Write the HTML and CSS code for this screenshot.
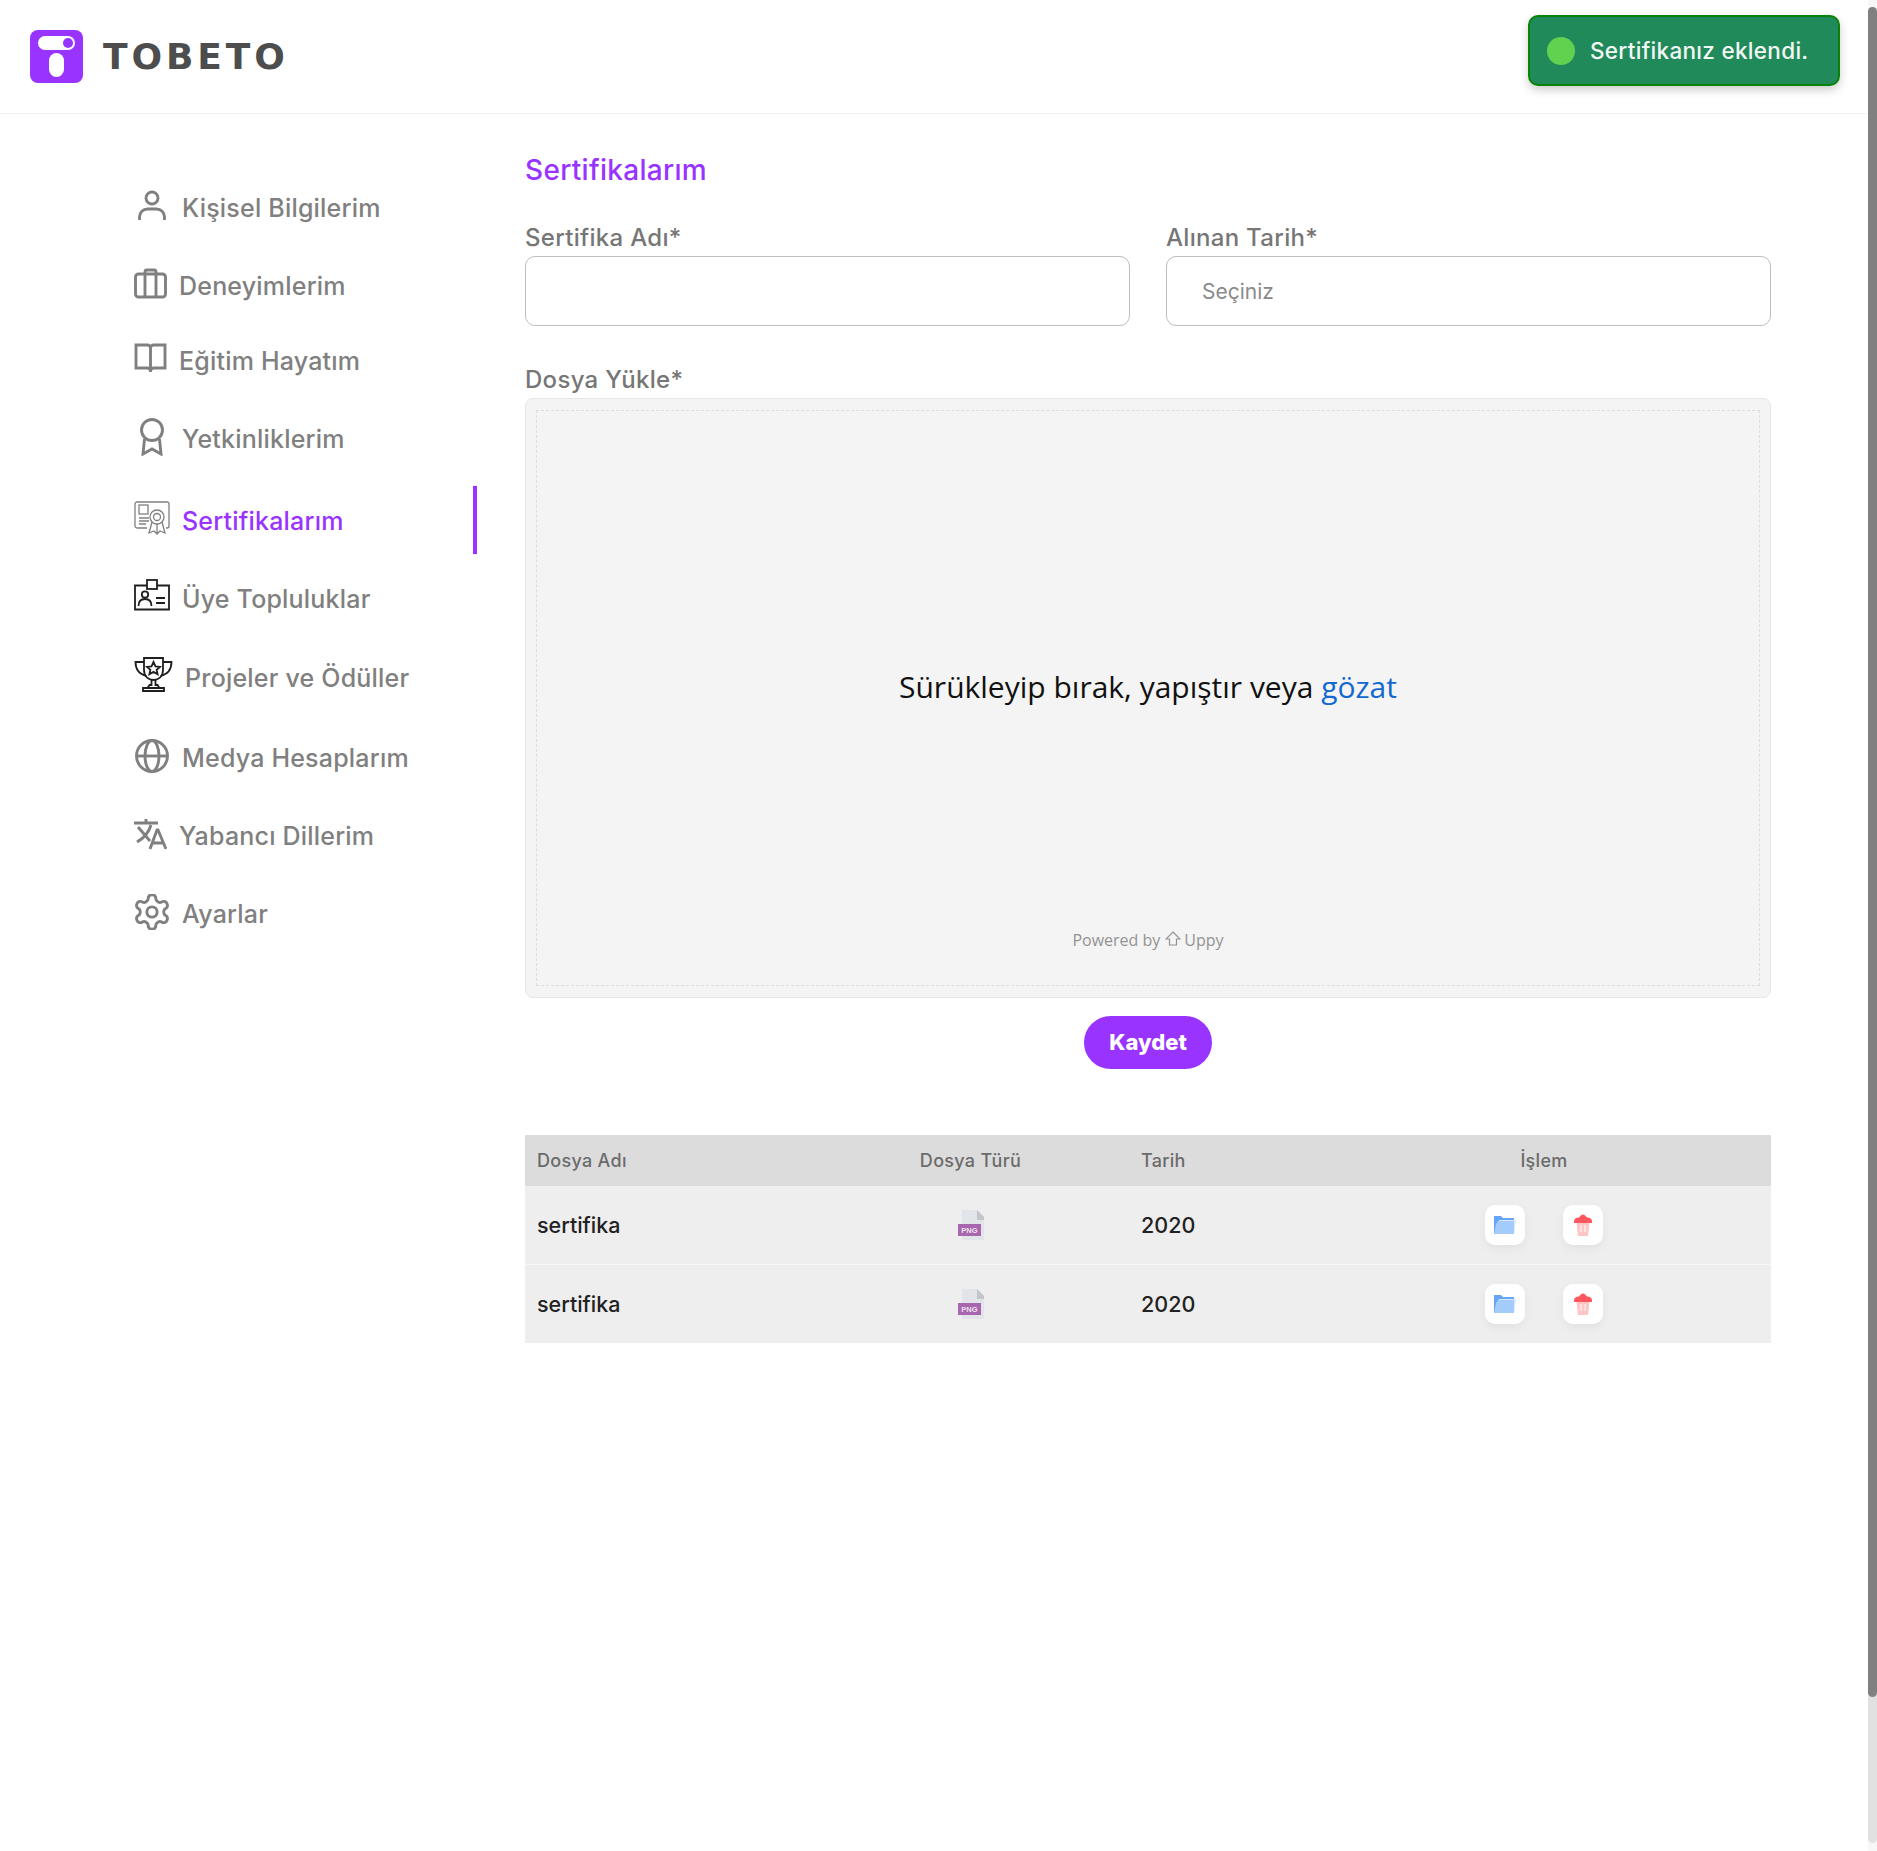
FILE: index.html
```html
<!DOCTYPE html>
<html lang="tr">
<head>
  <meta charset="UTF-8">
  <title>Tobeto - Sertifikalarım</title>
  <link rel="stylesheet" href="styles.css">
</head>
<body>
  <header class="topbar">
    <a class="brand" href="#">
      <svg class="brand-mark" viewBox="0 0 53 53">
        <rect width="53" height="53" rx="8" fill="#9933ff"/>
        <rect x="8" y="6" width="37" height="14" rx="7" fill="#fff"/>
        <circle cx="38" cy="13" r="5" fill="#9933ff"/>
        <rect x="19" y="23" width="15" height="24" rx="7.5" fill="#fff"/>
      </svg>
      <span class="brand-name">TOBETO</span>
    </a>
    <div class="toast">
      <span class="toast-dot"></span>
      <span>Sertifikanız eklendi.</span>
    </div>
  </header>

  <main class="layout">
    <nav class="sidebar">
      <a class="nav-item" href="#">
        <svg class="icon" viewBox="0 0 36 36"><circle cx="18" cy="10" r="6"/><path d="M5.5 32v-3a8 8 0 0 1 8-8h9a8 8 0 0 1 8 8v3"/></svg>
        <span>Kişisel Bilgilerim</span>
      </a>
      <a class="nav-item" href="#">
        <svg class="icon icon-sm" viewBox="0 0 33 36"><rect x="1.5" y="8" width="30" height="23" rx="3"/><path d="M11 31V6a2 2 0 0 1 2-2h7a2 2 0 0 1 2 2v25"/></svg>
        <span>Deneyimlerim</span>
      </a>
      <a class="nav-item nav-item-tight" href="#">
        <svg class="icon icon-sm" viewBox="0 0 33 36"><path d="M16.5 7v24M16.5 7a3 3 0 0 0-3-3H2v23h11c2 0 3.5 1 3.5 3 0-2 1.500-3 3.500-3h11V4H19.500a3 3 0 0 0-3 3z"/></svg>
        <span>Eğitim Hayatım</span>
      </a>
      <a class="nav-item" href="#">
        <svg class="icon icon-tall" viewBox="0 0 36 38"><circle cx="18" cy="12" r="10.500"/><path d="M10.500 21l-1.500 15 9-5 9 5-1.500-15"/></svg>
        <span>Yetkinliklerim</span>
      </a>
      <a class="nav-item nav-item-active" href="#">
        <svg class="icon icon-thin" viewBox="0 0 36 36"><path d="M13 28H3a2 2 0 0 1-2-2V4a2 2 0 0 1 2-2h30a2 2 0 0 1 2 2v22a2 2 0 0 1-2 2h-1"/><rect x="5" y="5" width="9" height="9"/><path d="M5 18h10M5 21h10M5 24h7"/><circle cx="23" cy="17" r="7"/><circle cx="23" cy="17" r="3.500"/><path d="M18 22l-3 11 5-2 3 3 3-3 5 2-3-11M23 24v10"/></svg>
        <span>Sertifikalarım</span>
      </a>
      <a class="nav-item" href="#">
        <svg class="icon icon-dark" viewBox="0 0 36 36"><path d="M13 6.500H1v24h34v-24H23"/><rect x="13" y="1" width="10" height="9"/><circle cx="11" cy="15.500" r="3.200"/><path d="M4.500 27c0-5 3-7 6.500-7s6.500 2 6.500 7M22 19h9M22 24h9"/></svg>
        <span>Üye Topluluklar</span>
      </a>
      <a class="nav-item nav-item-low" href="#">
        <svg class="icon icon-lg icon-dark icon-raised" viewBox="0 0 39 36"><path d="M10 2h19v12c0 6-4 10-9.500 10S10 20 10 14z"/><path d="M10 6H1.500c0 7 3 12 11 14M29 6h8.500c0 7-3 12-11 14M17.500 24v5h-2l-2 3h12l-2-3h-2v-5M9 32h21v3H9z"/><path d="M19.500 6l2 4.300 4.500.5-3.400 3 1 4.500-4.100-2.400-4.100 2.400 1-4.500-3.400-3 4.500-.5z"/></svg>
        <span>Projeler ve Ödüller</span>
      </a>
      <a class="nav-item nav-item-lower" href="#">
        <svg class="icon" viewBox="0 0 36 36"><circle cx="18" cy="18" r="15.500"/><ellipse cx="18" cy="18" rx="7" ry="15.500"/><path d="M2.500 18h31"/></svg>
        <span>Medya Hesaplarım</span>
      </a>
      <a class="nav-item" href="#">
        <svg class="icon icon-sm" viewBox="0 0 33 36"><path d="M0 7h24M12 3v4M4 11l12 14M17 9C15 16 10 22 3 26M16 33l7-19h1l8 19M18.500 27h11"/></svg>
        <span>Yabancı Dillerim</span>
      </a>
      <a class="nav-item" href="#">
        <svg class="icon icon-gear" viewBox="1.500 1.500 21 21"><path d="M12.220 2h-.44a2 2 0 0 0-2 2v.18a2 2 0 0 1-1 1.730l-.43.25a2 2 0 0 1-2 0l-.15-.08a2 2 0 0 0-2.730.73l-.22.38a2 2 0 0 0 .73 2.730l.15.1a2 2 0 0 1 1 1.720v.51a2 2 0 0 1-1 1.740l-.15.09a2 2 0 0 0-.73 2.730l.22.38a2 2 0 0 0 2.730.73l.15-.08a2 2 0 0 1 2 0l.43.25a2 2 0 0 1 1 1.730V20a2 2 0 0 0 2 2h.44a2 2 0 0 0 2-2v-.18a2 2 0 0 1 1-1.730l.43-.25a2 2 0 0 1 2 0l.15.08a2 2 0 0 0 2.730-.73l.22-.39a2 2 0 0 0-.73-2.730l-.15-.08a2 2 0 0 1-1-1.740v-.5a2 2 0 0 1 1-1.740l.15-.09a2 2 0 0 0 .73-2.730l-.22-.38a2 2 0 0 0-2.730-.73l-.15.08a2 2 0 0 1-2 0l-.43-.25a2 2 0 0 1-1-1.730V4a2 2 0 0 0-2-2z"/><circle cx="12" cy="12" r="3"/></svg>
        <span>Ayarlar</span>
      </a>
    </nav>

    <section class="content">
      <h1 class="page-title">Sertifikalarım</h1>

      <div class="field-row">
        <div class="field">
          <label class="field-label" for="certName">Sertifika Adı*</label>
          <input class="field-input" id="certName" type="text">
        </div>
        <div class="field">
          <label class="field-label" for="certDate">Alınan Tarih*</label>
          <input class="field-input" id="certDate" type="text" placeholder="Seçiniz">
        </div>
      </div>

      <div class="field-label upload-label">Dosya Yükle*</div>
      <div class="uppy">
        <div class="uppy-inner">
          <p class="uppy-text">Sürükleyip bırak, yapıştır veya <a href="#">gözat</a></p>
          <p class="uppy-powered">Powered by
            <svg class="uppy-arrow" viewBox="0 0 16 16"><path d="M8 1l7 7h-3.500v6h-7V8H1z"/></svg>Uppy</p>
        </div>
      </div>

      <div class="actions">
        <button class="save-btn" type="button">Kaydet</button>
      </div>

      <table class="files">
        <thead>
          <tr>
            <th class="col-name">Dosya Adı</th>
            <th class="col-type">Dosya Türü</th>
            <th class="col-date">Tarih</th>
            <th class="col-ops">İşlem</th>
          </tr>
        </thead>
        <tbody>
          <tr>
            <td class="col-name">sertifika</td>
            <td class="col-type">
              <svg class="png-icon" viewBox="0 0 26 30"><path d="M4 0h15l7 7v23H4z" fill="#e1e5e9"/><path d="M19 0l7 7v3h-7z" fill="#c2c6ca"/><rect y="14" width="23" height="12" fill="#a766ae"/><text x="11.500" y="23" class="png-label">PNG</text></svg>
            </td>
            <td class="col-date">2020</td>
            <td class="col-ops">
              <div class="ops">
                <button class="op-btn" type="button">
                  <svg class="op-icon" viewBox="0 0 22 18"><path d="M0 0h7l2 2h11v16H0z" fill="#68a5f7"/><path d="M5 4h17l-2 14H2z" fill="#d6e7fd"/><path d="M4 5h16v13H0l2-10z" fill="#a3ccfc"/></svg>
                </button>
                <button class="op-btn" type="button">
                  <svg class="op-icon op-trash" viewBox="0 0 18 22"><path d="M2.500 8h13l-1.500 14H4z" fill="#ffc4c4"/><path d="M7 11v7M11 11v7" stroke="#fff"/><path d="M0 7.500C0 5 2 3.500 5 3.500c1-1.500 2.500-3 4-3s3 1.500 4 3c3 0 5 1.500 5 4V9H0z" fill="#ff5660"/></svg>
                </button>
              </div>
            </td>
          </tr>
          <tr>
            <td class="col-name">sertifika</td>
            <td class="col-type">
              <svg class="png-icon" viewBox="0 0 26 30"><path d="M4 0h15l7 7v23H4z" fill="#e1e5e9"/><path d="M19 0l7 7v3h-7z" fill="#c2c6ca"/><rect y="14" width="23" height="12" fill="#a766ae"/><text x="11.500" y="23" class="png-label">PNG</text></svg>
            </td>
            <td class="col-date">2020</td>
            <td class="col-ops">
              <div class="ops">
                <button class="op-btn" type="button">
                  <svg class="op-icon" viewBox="0 0 22 18"><path d="M0 0h7l2 2h11v16H0z" fill="#68a5f7"/><path d="M5 4h17l-2 14H2z" fill="#d6e7fd"/><path d="M4 5h16v13H0l2-10z" fill="#a3ccfc"/></svg>
                </button>
                <button class="op-btn" type="button">
                  <svg class="op-icon op-trash" viewBox="0 0 18 22"><path d="M2.500 8h13l-1.500 14H4z" fill="#ffc4c4"/><path d="M7 11v7M11 11v7" stroke="#fff"/><path d="M0 7.500C0 5 2 3.500 5 3.500c1-1.500 2.500-3 4-3s3 1.500 4 3c3 0 5 1.500 5 4V9H0z" fill="#ff5660"/></svg>
                </button>
              </div>
            </td>
          </tr>
        </tbody>
      </table>
    </section>
  </main>

  <div class="scrollbar"><div class="scrollbar-track"><div class="scrollbar-thumb"></div></div></div>
</body>
</html>
```

FILE: styles.css
```css
* {
  box-sizing: border-box;
}

html, body {
  height: 100%;
}

body {
  margin: 0;
  overflow: hidden;
  background-color: white;
  font-family: Inter, "Noto Sans", sans-serif;
  color: #808080;
}

a {
  text-decoration: none;
  color: inherit;
}

/* header */

.topbar {
  display: flex;
  justify-content: space-between;
  align-items: flex-start;
  height: 114px;
  padding: 15px 37px 0 30px;
  border-bottom: 1px solid #f1f1f1;
}

.brand {
  display: flex;
  align-items: center;
  gap: 20px;
  margin-top: 15px;
}

.brand-mark {
  width: 53px;
  height: 53px;
}

.brand-name {
  font-family: "DejaVu Sans", sans-serif;
  font-size: 36px;
  font-weight: 700;
  letter-spacing: 3.9px;
  line-height: 53px;
  color: #4d4d4d;
}

.toast {
  display: flex;
  align-items: center;
  gap: 15px;
  width: 312px;
  height: 71px;
  padding-left: 17px;
  background-color: #218a5a;
  border: 2px solid #078407;
  border-radius: 10px;
  box-shadow: 0 4px 10px rgba(0,0,0,0.2);
  font-size: 22.500px;
  font-weight: 500;
  letter-spacing: 0.3px;
  color: #f2f7f4;
}

.toast-dot {
  width: 28px;
  height: 28px;
  border-radius: 50%;
  background-color: #60d24f;
}

/* layout */

.layout {
  display: flex;
  align-items: flex-start;
}

/* sidebar */

.sidebar {
  display: flex;
  flex-direction: column;
  gap: 10px;
  flex: none;
  width: 477px;
  padding: 59px 0 0 134px;
}

.nav-item {
  display: flex;
  align-items: center;
  gap: 12px;
  height: 68px;
  font-size: 25px;
  font-weight: 500;
  letter-spacing: 0.2px;
}

.nav-item span {
  padding-top: 2px;
}

.nav-item-tight {
  margin-top: -3px;
}

.nav-item-active {
  margin-top: 4px;
  border-right: 4px solid #9933ff;
  color: #9933ff;
}

.nav-item-low {
  margin-top: 1px;
}

.nav-item-lower {
  margin-top: 2px;
}

.icon {
  flex: none;
  width: 36px;
  height: 36px;
  margin-bottom: 2px;
  fill: none;
  stroke: #808080;
  stroke-width: 2.900;
}

.icon-sm {
  width: 33px;
}

.icon-lg {
  width: 39px;
}

.icon-tall {
  height: 38px;
}

.icon-thin {
  margin-bottom: 5px;
  stroke-width: 1.300;
}

.icon-dark {
  stroke: #1f1f1f;
  stroke-width: 1.800;
}

.icon-raised {
  margin-bottom: 7px;
}

.icon-gear {
  stroke-width: 1.700;
}

/* form */

.content {
  flex: none;
  width: 1246px;
  margin-left: 48px;
  padding-top: 36px;
}

.page-title {
  margin: 0 0 33px;
  font-size: 28px;
  line-height: 40px;
  font-weight: 500;
  letter-spacing: 0.3px;
  color: #9933ff;
}

.field-row {
  display: flex;
  gap: 36px;
  margin-bottom: 39px;
}

.field {
  flex: 1;
}

.field-label {
  display: block;
  margin-bottom: 3px;
  font-size: 24px;
  line-height: 30px;
  font-weight: 500;
  letter-spacing: 0.3px;
  color: #767676;
}

.field-input {
  display: block;
  width: 100%;
  height: 70px;
  padding: 0 35px;
  border: 1px solid #bdbdbd;
  border-radius: 10px;
  background-color: white;
  font-family: inherit;
  font-size: 21px;
}

.field-input::placeholder {
  color: #8a8a8a;
}

/* uppy */

.uppy {
  height: 600px;
  padding: 11px 10px;
  background-color: #f4f4f4;
  border: 1px solid #e6e6e6;
  border-radius: 8px;
}

.uppy-inner {
  display: flex;
  flex-direction: column;
  align-items: center;
  height: 100%;
  border: 1px dashed #dedede;
  font-family: "Open Sans", "Noto Sans", sans-serif;
}

.uppy-text {
  margin: 254px 0 0;
  font-size: 30px;
  line-height: 44px;
  color: #111;
}

.uppy-text a {
  color: #1269cf;
}

.uppy-powered {
  display: flex;
  align-items: center;
  gap: 5px;
  margin: auto 0 34px;
  font-size: 16px;
  color: #939393;
}

.uppy-arrow {
  width: 16px;
  height: 16px;
  margin-right: -2px;
  margin-top: -3px;
  fill: none;
  stroke: #939393;
  stroke-width: 1.200;
}

.actions {
  display: flex;
  justify-content: center;
  margin-top: 18px;
}

.save-btn {
  width: 128px;
  height: 53px;
  padding: 0 0 2px;
  border: none;
  border-radius: 27px;
  background-color: #9933ff;
  color: white;
  font-family: inherit;
  font-size: 22px;
  font-weight: 800;
}

/* table */

.files {
  width: 100%;
  margin-top: 66px;
  border-collapse: collapse;
  table-layout: fixed;
  background-color: #eeeeee;
}

.files th {
  height: 51px;
  padding: 0 12px;
  background-color: #dcdcdc;
  font-size: 18px;
  font-weight: 500;
  letter-spacing: 0.3px;
  color: #6b6b6b;
}

.files td {
  height: 78px;
  padding: 0 12px;
  font-size: 21.500px;
  font-weight: 500;
  color: #222;
}

.files tbody tr + tr td {
  height: 79px;
  border-top: 1px solid #f6f6f6;
}

.col-name {
  width: 287px;
  text-align: left;
}

.col-type {
  width: 317px;
  text-align: center;
}

.col-date {
  width: 188px;
  text-align: left;
}

.col-ops {
  text-align: center;
}

.png-icon {
  display: block;
  width: 26px;
  height: 30px;
  margin: 0 auto;
}

.png-label {
  font-family: "Liberation Sans", sans-serif;
  font-size: 7.500px;
  font-weight: 700;
  text-anchor: middle;
  fill: #efe3f1;
}

.ops {
  display: flex;
  justify-content: center;
  gap: 38px;
}

.op-btn {
  display: flex;
  align-items: center;
  justify-content: center;
  width: 40px;
  height: 40px;
  padding: 0;
  border: none;
  border-radius: 10px;
  background-color: white;
  box-shadow: 0 4px 10px rgba(0,0,0,0.05);
}

.op-icon {
  width: 22px;
  height: 18px;
}

.op-trash {
  width: 18px;
  height: 22px;
}

/* fake page scrollbar, sits over the page edge */

.scrollbar {
  position: absolute;
  top: 0;
  right: 0;
  bottom: 0;
  width: 9px;
  padding-top: 7px;
  background-color: #f7f7f7;
}

.scrollbar-track {
  height: 1836px;
  border-radius: 5px;
  background-color: #e1e1e1;
}

.scrollbar-thumb {
  height: 1690px;
  border-radius: 5px;
  background-color: #808080;
}
```
